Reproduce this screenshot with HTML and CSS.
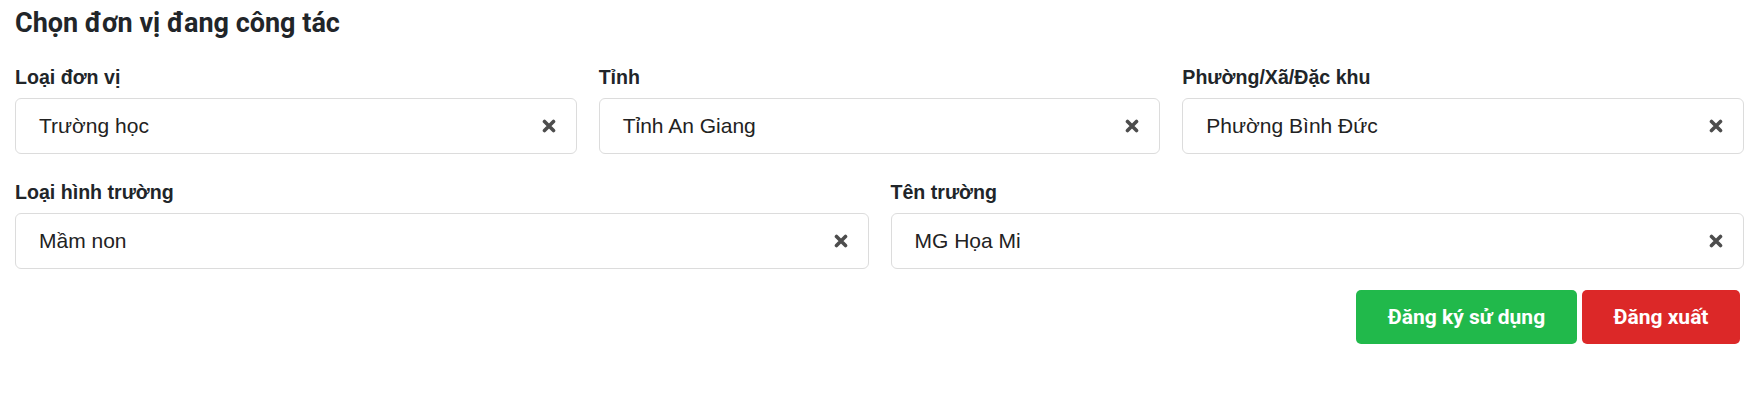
FILE: index.html
```html
<!DOCTYPE html>
<html lang="vi">
<head>
<meta charset="utf-8">
<title>Chọn đơn vị đang công tác</title>
<link rel="stylesheet" href="styles.css">
</head>
<body>
<div class="page">
  <h2 class="title">Chọn đơn vị đang công tác</h2>
  <div class="row row-3">
    <div class="field">
      <label class="label">Loại đơn vị</label>
      <div class="select"><span class="value">Trường học</span><svg class="clear" viewBox="0 0 14 14"><path d="M2.5 2.5 L11.5 11.5 M11.5 2.5 L2.5 11.5"/></svg></div>
    </div>
    <div class="field">
      <label class="label">Tỉnh</label>
      <div class="select"><span class="value">Tỉnh An Giang</span><svg class="clear" viewBox="0 0 14 14"><path d="M2.5 2.5 L11.5 11.5 M11.5 2.5 L2.5 11.5"/></svg></div>
    </div>
    <div class="field">
      <label class="label">Phường/Xã/Đặc khu</label>
      <div class="select"><span class="value">Phường Bình Đức</span><svg class="clear" viewBox="0 0 14 14"><path d="M2.5 2.5 L11.5 11.5 M11.5 2.5 L2.5 11.5"/></svg></div>
    </div>
  </div>
  <div class="row row-2">
    <div class="field">
      <label class="label">Loại hình trường</label>
      <div class="select"><span class="value">Mầm non</span><svg class="clear" viewBox="0 0 14 14"><path d="M2.5 2.5 L11.5 11.5 M11.5 2.5 L2.5 11.5"/></svg></div>
    </div>
    <div class="field">
      <label class="label">Tên trường</label>
      <div class="select"><span class="value">MG Họa Mi</span><svg class="clear" viewBox="0 0 14 14"><path d="M2.5 2.5 L11.5 11.5 M11.5 2.5 L2.5 11.5"/></svg></div>
    </div>
  </div>
  <div class="actions">
    <button class="btn btn-success">Đăng ký sử dụng</button>
    <button class="btn btn-danger">Đăng xuất</button>
  </div>
</div>
</body>
</html>
```
FILE: styles.css
```css
* { box-sizing: border-box; }
html, body { margin: 0; padding: 0; background: #fff; }
body { font-family: "Liberation Sans", Arial, sans-serif; color: #212529; }
.page { padding: 8px 13px 0 15px; }
.title {
  margin: 0;
  font-family: Roboto, "Liberation Sans", sans-serif;
  font-weight: 700;
  font-size: 27px;
  line-height: 30px;
  color: #212529;
}
.row { display: grid; column-gap: 22px; }
.row-3 { grid-template-columns: 1fr 1fr 1fr; margin-top: 27px; }
.row-2 { grid-template-columns: 1fr 1fr; margin-top: 26px; }
.field { display: flex; flex-direction: column; }
.label {
  display: block;
  font-weight: 700;
  font-size: 19.6px;
  line-height: 24px;
  margin-bottom: 9px;
  color: #212529;
}
.select {
  height: 56px;
  border: 1px solid #dcdcdc;
  border-radius: 6px;
  display: flex;
  align-items: center;
  padding: 0 20px 0 23px;
  background: #fff;
}
.value { flex: 1; font-size: 21px; color: #222; }
.clear { width: 14px; height: 14px; flex: none; }
.clear path { stroke: #4d4d4d; stroke-width: 3.6; stroke-linecap: round; fill: none; }
.actions {
  display: flex;
  justify-content: flex-end;
  gap: 5px;
  margin-top: 21px;
  padding-right: 4px;
}
.btn {
  height: 54px;
  border: none;
  border-radius: 5px;
  font-family: Roboto, "Liberation Sans", sans-serif;
  font-weight: 700;
  font-size: 21px;
  color: #fff;
  padding: 0;
}
.btn-success { background: #21b94b; width: 221px; }
.btn-danger { background: #dc2828; width: 158px; }
```
